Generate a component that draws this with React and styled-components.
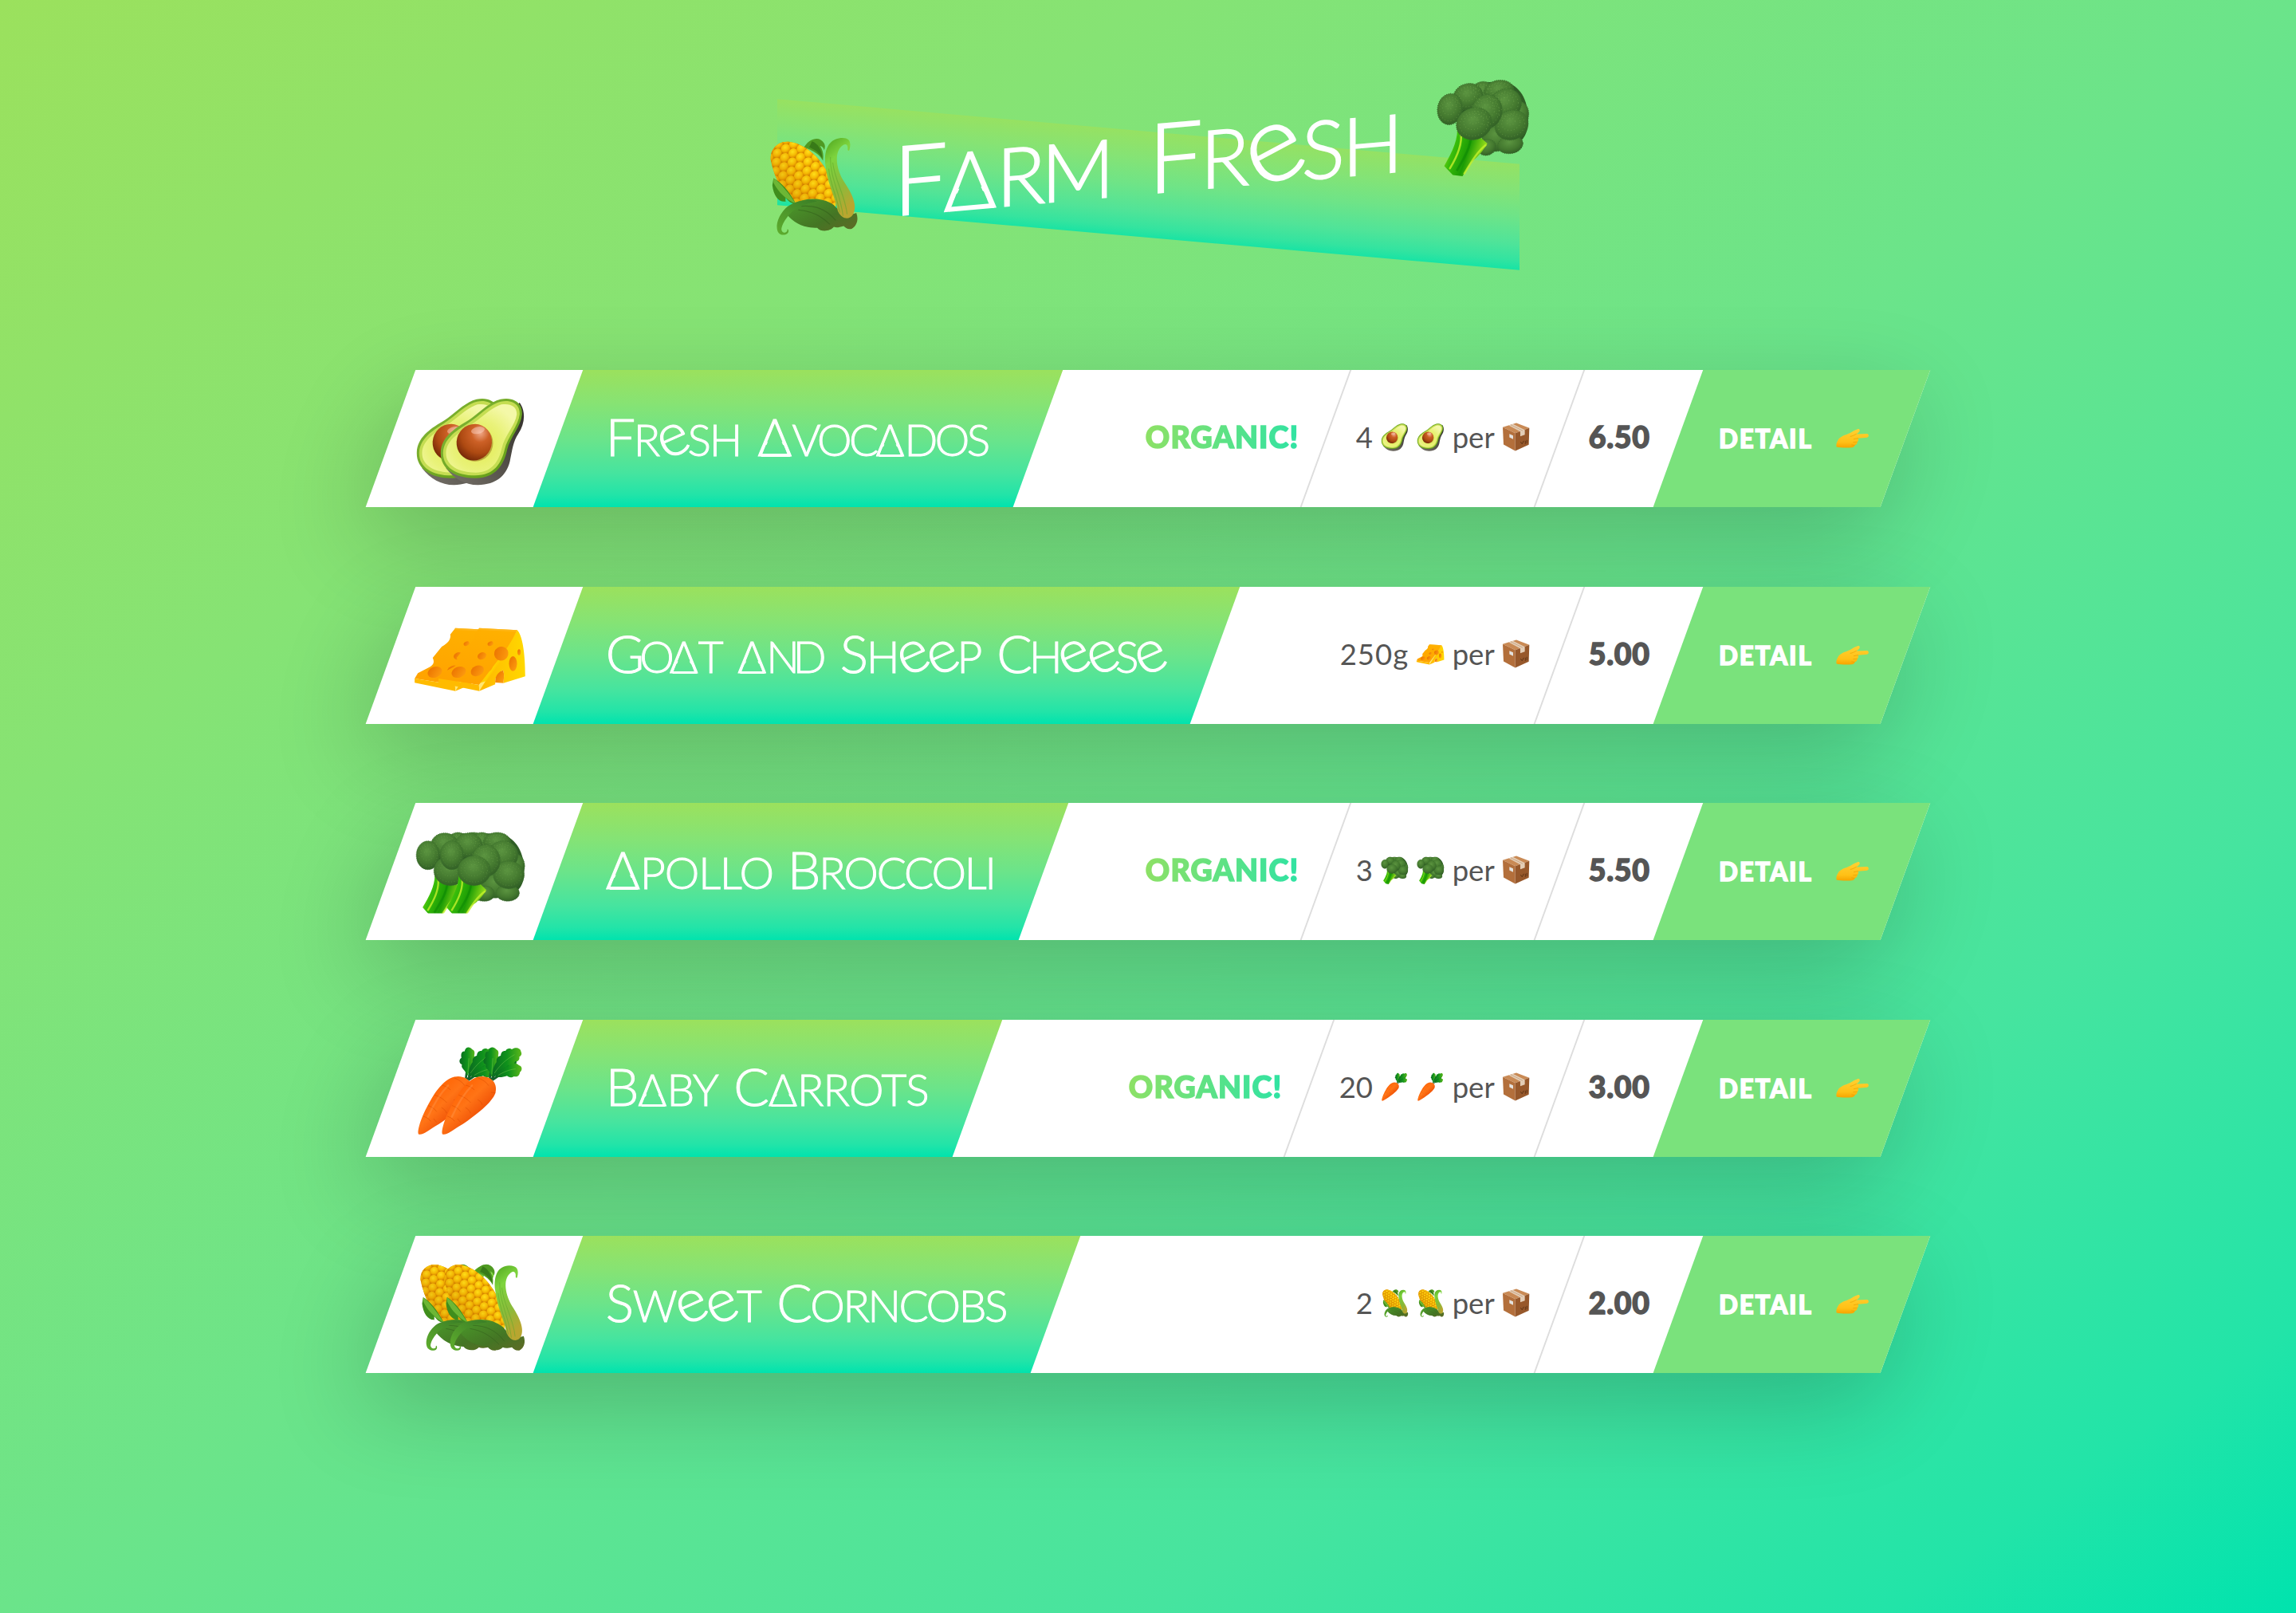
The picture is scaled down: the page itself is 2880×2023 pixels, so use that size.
import React, { useLayoutEffect, useRef, useState } from "react";
import styled, { createGlobalStyle, css } from "styled-components";

const GlobalStyle = createGlobalStyle`
  *, *::before, *::after { box-sizing: border-box; }
  body {
    margin: 0;
    font-family: Lato, "Open Sans", sans-serif;
    color: #555;
  }
`;

const FRESH_STOPS = "#9be15d, #86e374 25%, #6be48a 50%, #46e49f 75%, #22e4a8 91%, #00e3ae";

const Page = styled.main`
  min-height: 2023px;
  padding-top: 165px;
  background: linear-gradient(to bottom right, ${FRESH_STOPS});
  overflow: hidden;
`;

/* ---------- emoji style drawings ---------- */

const Svg = styled.svg`
  display: block;
  flex: none;
  width: ${(p) => p.$w}px;
  height: ${(p) => p.$h || p.$w}px;
  overflow: visible;
  ${(p) =>
    p.$cropped &&
    css`
      clip-path: inset(-2px -4px 6% -4px);
    `}
`;

function Avocado(props) {
  return (
    <Svg viewBox="0 0 330 330" {...props}>
      <defs>
        <radialGradient id="avoFlesh" cx=".45" cy=".6" r=".62">
          <stop offset="0" stopColor="#e2ea4c" />
          <stop offset=".6" stopColor="#e9f27a" />
          <stop offset="1" stopColor="#f4f8a8" />
        </radialGradient>
        <linearGradient id="avoSkin" x1="0" y1="0" x2="1" y2="1">
          <stop offset="0" stopColor="#86b83a" />
          <stop offset="1" stopColor="#5f9a12" />
        </linearGradient>
        <linearGradient id="avoBack" x1="1" y1="0" x2="0" y2="1">
          <stop offset="0" stopColor="#2f2c28" />
          <stop offset="1" stopColor="#77726a" />
        </linearGradient>
        <radialGradient id="avoPit" cx=".55" cy=".2" r=".85">
          <stop offset="0" stopColor="#f0a888" />
          <stop offset=".3" stopColor="#cc6026" />
          <stop offset=".65" stopColor="#ae4a12" />
          <stop offset="1" stopColor="#6a2206" />
        </radialGradient>
      </defs>
      <path fill="url(#avoBack)" d="M30 265C62 305 100 328 150 328c70-2 107-36 120-88 10-46 12-75 32-105 26-38 28-85 5-117z" />
      <path fill="url(#avoSkin)" d="M10 205C12 150 58 118 105 90 150 64 185 18 235 5c50-10 83 14 81 57-3 44-46 88-56 133-12 56-42 107-120 107C60 302 8 265 10 205z" />
      <path fill="#c5dd52" d="M19 205C22 155 65 125 109 98 155 70 190 26 236 14c43-8 73 11 71 48-4 42-46 86-56 131-12 53-40 99-111 99C66 292 17 260 19 205z" />
      <path fill="url(#avoFlesh)" d="M30 205C33 162 72 134 116 107 160 80 196 38 238 25c35-6 60 9 58 38-4 38-46 80-56 126-11 50-38 92-98 92C78 281 28 255 30 205z" />
      <ellipse cx="139" cy="170" rx="68" ry="69" fill="#8a5a10" opacity=".45" />
      <ellipse cx="136" cy="167" rx="66" ry="69" fill="url(#avoPit)" transform="rotate(25 136 167)" />
      <ellipse cx="150" cy="122" rx="26" ry="13" fill="#ffd9cc" opacity=".45" transform="rotate(-12 150 122)" />
    </Svg>
  );
}

function Cheese(props) {
  return (
    <Svg viewBox="0 0 330 330" {...props}>
      <defs>
        <linearGradient id="chTop" x1=".6" y1="0" x2=".3" y2="1">
          <stop offset="0" stopColor="#ffb000" />
          <stop offset="1" stopColor="#ffa200" />
        </linearGradient>
        <linearGradient id="chSide" x1="0" y1="0" x2="1" y2="0">
          <stop offset="0" stopColor="#ffb700" />
          <stop offset="1" stopColor="#ffd800" />
        </linearGradient>
        <linearGradient id="chHole" x1="0" y1="0" x2="1" y2="1">
          <stop offset="0" stopColor="#e96f00" />
          <stop offset="1" stopColor="#ffa010" />
        </linearGradient>
      </defs>
      <path fill="url(#chSide)" d="M298 58c20 20 30 90 30 174l-82 25c2-20 4-38-2-48-14 4-26 18-28 32l-1 21-60 25z" />
      <path fill="url(#chTop)" d="M155 50l143 8c-22 44-44 78-68 108l-76 98-152-24 12-20 42-22c16-8 22-18 14-36l34-42c22-12 36-28 32-46z" />
      <path fill="#ffb81c" d="M155 50l143 8-4 6-142-7z" opacity=".8" />
      <path fill="#ffbb00" d="M2 240l152 24 1 23L2 256z" />
      <path fill="#ffd200" d="M154 264l76-98 6 6-81 115z" opacity=".55" />
      <g fill="url(#chHole)">
        <ellipse cx="197" cy="109" rx="11" ry="8" transform="rotate(-25 197 109)" />
        <ellipse cx="165" cy="155" rx="17" ry="13" transform="rotate(-25 165 155)" />
        <ellipse cx="78" cy="216" rx="28" ry="20" transform="rotate(-22 78 216)" />
        <ellipse cx="148" cy="211" rx="26" ry="19" transform="rotate(-25 148 211)" />
        <ellipse cx="238" cy="146" rx="27" ry="26" transform="rotate(-30 238 146)" />
        <ellipse cx="282" cy="184" rx="15" ry="28" />
        <ellipse cx="305" cy="141" rx="6" ry="11" />
        <path d="M246 257c2-20 4-38-2-48-14 4-26 18-28 32l-1 14z" />
      </g>
    </Svg>
  );
}

const FLORETS = [
  [215, 205, 52, 48],
  [180, 236, 32, 28],
  [262, 234, 44, 31],
  [290, 132, 36, 46],
  [165, 42, 40, 36],
  [222, 44, 52, 38],
  [245, 92, 56, 54],
  [266, 166, 58, 52],
  [115, 54, 52, 46],
  [52, 92, 44, 54],
  [180, 112, 54, 60],
  [136, 150, 62, 56],
];

function Broccoli(props) {
  return (
    <Svg viewBox="0 0 330 330" {...props}>
      <defs>
        <radialGradient id="brFloret" cx=".45" cy=".35" r=".68">
          <stop offset="0" stopColor="#5b9440" />
          <stop offset=".6" stopColor="#44792f" />
          <stop offset="1" stopColor="#305e25" />
        </radialGradient>
        <linearGradient id="brStem" x1="0" y1="0" x2="1" y2=".4">
          <stop offset="0" stopColor="#b8ec20" />
          <stop offset=".35" stopColor="#38bd0a" />
          <stop offset=".65" stopColor="#1c9c05" />
          <stop offset="1" stopColor="#9be01c" />
        </linearGradient>
      </defs>
      <path fill="#2f5d25" d="M60 50c40-40 130-50 200-30 50 30 66 80 64 150-6 50-40 80-90 70L80 150z" />
      {FLORETS.slice(0, 4).map(([x, y, rx, ry]) => (
        <ellipse key={`${x}-${y}`} cx={x} cy={y} rx={rx} ry={ry} fill="url(#brFloret)" stroke="#396a2b" strokeWidth="3" strokeDasharray="3 4" />
      ))}
      <path fill="url(#brStem)" d="M76 150c8 44-16 92-44 138l30 34 34 7 28-46c26-14 44-38 58-60l-30-30z" />
      <path fill="none" stroke="#c4f02c" strokeWidth="7" strokeLinecap="round" d="M90 180c6 40-14 80-38 118M176 228c-26 18-46 48-74 92" opacity=".8" />
      <path fill="none" stroke="#0f8a04" strokeWidth="8" d="M124 196c0 30-18 64-48 112" opacity=".65" />
      {FLORETS.slice(4).map(([x, y, rx, ry]) => (
        <ellipse key={`${x}-${y}`} cx={x} cy={y} rx={rx} ry={ry} fill="url(#brFloret)" stroke="#3b6f2d" strokeWidth="3" strokeDasharray="3 4" />
      ))}
      {FLORETS.slice(4).map(([x, y, rx, ry]) => (
        <g key={`${x}-${y}`} fill="none" stroke="#7fb257" strokeWidth="3" strokeDasharray="2 9" opacity=".5">
          <ellipse cx={x - 2} cy={y - 8} rx={rx * 0.55} ry={ry * 0.5} />
          <ellipse cx={x - 2} cy={y - 12} rx={rx * 0.25} ry={ry * 0.22} />
          <ellipse cx={x} cy={y} rx={rx * 0.8} ry={ry * 0.76} />
        </g>
      ))}
    </Svg>
  );
}

function Carrot(props) {
  return (
    <Svg viewBox="0 0 330 330" {...props}>
      <defs>
        <linearGradient id="caBody" x1=".25" y1=".25" x2=".75" y2=".8">
          <stop offset="0" stopColor="#ff6405" />
          <stop offset=".4" stopColor="#ff7416" />
          <stop offset="1" stopColor="#ea4300" />
        </linearGradient>
        <linearGradient id="caLeaf" x1="0" y1="0" x2="1" y2="0">
          <stop offset="0" stopColor="#0a6a20" />
          <stop offset=".5" stopColor="#0f921c" />
          <stop offset="1" stopColor="#5cb81c" />
        </linearGradient>
      </defs>
      <path fill="none" stroke="#14602c" strokeWidth="8" d="M194 122l6-50M198 122l50-62M204 122l50-34" />
      <path fill="#0b7420" d="M202 110c10-44 30-70 62-84l34 16-10 48c-24 14-60 10-86 20z" />
      <path fill="url(#caLeaf)" d="M200 106c-6-22-26-28-20-42-14-8-10-22-2-26-4-18 4-26 12-24 2-18 20-20 28-8 12 4 10 18 8 24 6 14 0 20-4 26 2 18-13 30-22 50z" />
      <path fill="url(#caLeaf)" d="M204 110c0-28 8-46 16-56-2-16 8-22 16-24 0-14 10-20 18-18 6-12 18-10 24-6 12-10 32-6 34 8 6 12-2 18-6 20 2 14-8 20-16 18-6 16-18 18-26 14-14 12-44 20-60 44z" />
      <path fill="url(#caLeaf)" d="M214 110c12-24 30-38 48-40 14-16 34-14 42-4 16 4 12 22 4 26-2 18-16 18-22 16-12 8-22 2-26-2-16 6-28 6-46 4z" />
      <path fill="none" stroke="#9be060" strokeWidth="2" opacity=".5" d="M202 100l4-60M212 96c20-30 44-52 76-70M226 104c20-12 42-22 66-24" />
      <path fill="url(#caBody)" d="M18 326C8 322 24 262 62 198c28-50 64-90 104-90 42 2 58 32 50 62-12 36-74 84-124 118-34 20-60 42-74 38z" />
      <g fill="none" stroke="#d94a00" strokeWidth="3" opacity=".5" strokeLinecap="round">
        <path d="M106 142c12 2 22 8 30 16M152 114c16 6 30 16 38 28M78 178c18 6 34 16 44 28M200 168l14 2M150 196c10 6 14 10 16 18M54 218c14 6 24 12 30 22M104 226c10 6 16 12 18 20M36 258c10 4 20 10 26 18M74 268l10 12" />
      </g>
      <path fill="none" stroke="#ffb070" strokeWidth="7" strokeLinecap="round" opacity=".25" d="M128 142c-34 34-58 78-76 118" />
    </Svg>
  );
}

const KERNELS = [];
for (let row = -1; row < 13; row += 1) {
  for (let col = -1; col < 7; col += 1) {
    KERNELS.push([col * 32 + (row % 2 ? 16 : 0), row * 27 + 8]);
  }
}

function Corn(props) {
  return (
    <Svg viewBox="0 0 330 330" {...props}>
      <defs>
        <clipPath id="coCob">
          <path d="M24 60C22 20 55-2 88 4c56 12 112 66 142 136 20 50 25 90 18 110L110 225C70 190 38 130 24 60z" />
        </clipPath>
        <radialGradient id="coKernel" cx=".5" cy=".35" r=".65">
          <stop offset="0" stopColor="#ffe21a" />
          <stop offset=".6" stopColor="#f8bd04" />
          <stop offset="1" stopColor="#e08e00" />
        </radialGradient>
        <linearGradient id="coShade" x1=".8" y1=".1" x2=".1" y2=".7">
          <stop offset=".4" stopColor="#c87800" stopOpacity="0" />
          <stop offset="1" stopColor="#b86400" stopOpacity=".5" />
        </linearGradient>
        <linearGradient id="coHusk" x1="0" y1="0" x2=".3" y2="1">
          <stop offset="0" stopColor="#4fa51e" />
          <stop offset=".3" stopColor="#7ed43e" />
          <stop offset=".7" stopColor="#8cba3a" />
          <stop offset="1" stopColor="#b8a630" />
        </linearGradient>
        <linearGradient id="coBase" x1="0" y1="0" x2="1" y2="1">
          <stop offset="0" stopColor="#4a9a2a" />
          <stop offset=".6" stopColor="#447524" />
          <stop offset="1" stopColor="#5f6a26" />
        </linearGradient>
        <linearGradient id="coCurl" x1="1" y1="0" x2="0" y2="1">
          <stop offset="0" stopColor="#3a7d26" />
          <stop offset="1" stopColor="#5fae2e" />
        </linearGradient>
      </defs>
      <path fill="#4f9a22" d="M140 28c20-30 54-36 70-8 4 8 4 16 0 24-2-10-8-14-14-16 12 20 12 34 10 52-14-26-38-40-66-52z" />
      <path fill="#2f6c14" d="M168 10c22 10 34 34 36 62-12-20-26-34-46-42z" opacity=".7" />
      <g clipPath="url(#coCob)">
        <rect width="330" height="330" fill="#d28200" />
        <g transform="rotate(-25 60 40)">
          {KERNELS.map(([x, y]) => (
            <ellipse key={`${x}-${y}`} cx={x} cy={y} rx="16.5" ry="16" fill="url(#coKernel)" />
          ))}
        </g>
        <rect width="330" height="330" fill="url(#coShade)" />
      </g>
      <path fill="#3f8e1c" d="M34 126c24 14 54 48 78 96-20-2-28-14-36-24 0 10-2 14 4 12-24 6-46-20-50-60z" />
      <path fill="#78c23c" d="M34 126c28 22 50 54 78 96-34-18-60-44-78-80z" opacity=".8" />
      <path fill="url(#coBase)" d="M104 220c50-18 104-12 140 18 26 32 54 42 78 34 8 20 4 44-16 54-14 2-22-6-28-12-18 4-26 4-34 0-12 14-44 16-58-2-46-2-80-22-106-56z" />
      <path fill="none" stroke="#2f5c1a" strokeWidth="3" opacity=".5" d="M130 232c50 0 90 20 120 60M120 244c50 8 80 30 110 60" />
      <path fill="url(#coCurl)" d="M108 218c30-8 62-8 78 2-38 4-82 16-104 46-14 16-22 36-20 44 4 12 14 10 20 4-2-6 2-8 4-2 2 16-18 18-30 10C30 302 56 230 108 218z" />
      <path fill="url(#coHusk)" d="M215 100C208 45 225 8 268 7c28 0 38 14 30 44-2 4-6 2-6-2 2-18-8-24-20-14-30 24-18 84 8 126 32 50 46 90 30 116-12 18-38 14-52-16-10-50-36-100-43-161z" />
      <path fill="none" stroke="#5ea62c" strokeWidth="3" opacity=".55" d="M232 70c-2 70 34 130 44 208M240 90c6 60 44 120 50 184M226 110c6 60 30 100 38 156" />
    </Svg>
  );
}

function Parcel(props) {
  return (
    <Svg viewBox="0 0 102 107" {...props}>
      <path fill="#c98a55" d="M1 17L52 1l49 19-53 19z" />
      <path fill="#b36f3b" d="M1 17l47 22v67L4 82z" />
      <path fill="#97582b" d="M48 39l53-19-2 63-51 23z" />
      <path fill="#e3cdb6" d="M23 10l16-5 45 22v18l-17 6V33z" />
      <path fill="none" stroke="#c0966e" strokeWidth="2" d="M31 8l45 22" />
      <path fill="#e4e2df" d="M26 42l14 6v14l-14-7z" />
      <path fill="none" stroke="#5f3415" strokeWidth="3" d="M68 72l6 8 6-12M86 68v12M92 65v12" />
    </Svg>
  );
}

function PointingHand(props) {
  return (
    <Svg viewBox="0 0 124 72" {...props}>
      <defs>
        <linearGradient id="hand" x1="0" y1="0" x2="0" y2="1">
          <stop offset="0" stopColor="#ffd234" />
          <stop offset=".7" stopColor="#ffc016" />
          <stop offset="1" stopColor="#f5a400" />
        </linearGradient>
      </defs>
      <path fill="url(#hand)" d="M8 42C16 26 40 22 54 15 64 9 74 3 84 0c7 0 8 6 4 11l-10 8 40-1c8 2 8 12 0 14l-34 3c3 6 1 11-3 13 1 8-4 12-9 13-2 6-6 9-12 9-18 2-42 1-58-2C0 58 3 50 8 42z" />
      <path fill="none" stroke="#e89c00" strokeWidth="2" strokeLinecap="round" d="M77 19c-8 4-14 8-22 9M84 35l-16 3M80 49l-14 1M70 62l-10-2" />
    </Svg>
  );
}

/* ---------- text fitted to its measure ---------- */

const Measure = styled.span`
  display: inline-block;
  flex: none;
  width: ${(p) => p.$width}px;
  white-space: nowrap;
`;
const Natural = styled.span`
  display: inline-block;
`;

function Tracked({ width, slack = 0, gaps, children }) {
  const ref = useRef(null);
  const [tracking, setTracking] = useState(0);
  useLayoutEffect(() => {
    setTracking((width + slack - ref.current.offsetWidth) / Math.max(gaps, 1));
  }, [width, slack, gaps]);
  return (
    <Measure $width={width}>
      <Natural ref={ref} style={{ letterSpacing: tracking, marginLeft: -slack * 0.35 }}>
        {children}
      </Natural>
    </Measure>
  );
}

const Display = styled.span`
  display: flex;
  gap: ${(p) => p.$gap}px;
  font-size: ${(p) => p.$size}px;
  font-weight: 300;
  line-height: 1;
  color: #fff;
  text-transform: uppercase;
  -webkit-text-stroke: 0.018em #fff;
`;
const Capital = styled.span`
  font-size: 1.2em;
  line-height: 0;
`;
const RoundE = styled.span`
  display: inline-block;
  font-size: 1.36em;
  line-height: 0;
  text-transform: none;
  transform: rotate(-24deg);
  transform-origin: 46% 0.13em;
`;
/* The crossbar is cut out of the letter and laid along its baseline. */
const DeltaA = styled.span`
  position: relative;
  display: inline-block;
  margin: -0.2em 0;
  font-size: ${(p) => (p.$capital ? 1.2 : 1)}em;
  line-height: 1;
  letter-spacing: 0;
  clip-path: polygon(
    evenodd,
    0 0, 100% 0, 100% 100%, 0 100%, 0 0,
    calc(50% - 0.09em) 0.52em,
    calc(50% + 0.09em) 0.52em,
    calc(50% + 0.21em) 0.78em,
    calc(50% - 0.21em) 0.78em,
    calc(50% - 0.09em) 0.52em,
    0 0
  );
  &::after {
    content: "";
    position: absolute;
    left: 10%;
    right: 5%;
    top: 0.835em;
    height: 0.06em;
    background: #fff;
  }
`;

function DisplayWord({ text, width, size, slack = 0.09 }) {
  const fixed = (text.match(/a/gi) || []).length;
  return (
    <Tracked width={width} slack={size * slack} gaps={text.length - 1 - fixed}>
      {text.split(/([aeA]|^[A-Z])/).filter(Boolean).map((part, i) => {
        if (part === "e") return <RoundE key={i}>e</RoundE>;
        if (part === "a" || part === "A") return <DeltaA key={i} $capital={part === "A"}>{part}</DeltaA>;
        if (i === 0 && part.length === 1 && part !== part.toLowerCase()) return <Capital key={i}>{part}</Capital>;
        return part;
      })}
    </Tracked>
  );
}

/* ---------- header ---------- */

const Header = styled.header`
  position: relative;
  display: flex;
  justify-content: center;
  width: 931px;
  height: 133px;
  margin: 0 auto 166px;
  &::before {
    content: "";
    position: absolute;
    inset: 0;
    background: linear-gradient(${FRESH_STOPS});
    opacity: 0.8;
    transform: skewY(5deg);
  }
`;
const Heading = styled.h1`
  position: relative;
  display: flex;
  flex: none;
  align-items: flex-start;
  justify-content: space-between;
  width: 961px;
  margin: -28px 0 0 -3px;
  transform: skewY(-5deg);
`;
const HeadingText = styled.span`
  padding-top: 17px;
`;

/* ---------- product rows ---------- */

const List = styled.ul`
  display: flex;
  flex-direction: column;
  gap: 100px;
  width: 1900px;
  margin: 0 auto;
  padding: 0;
  list-style: none;
`;
const Row = styled.li`
  display: flex;
  height: 171.6px;
  background: #fff;
  box-shadow: 0 40px 120px rgba(0, 0, 0, 0.2);
  transform: skewX(-20deg);
`;
const Upright = styled.span`
  display: flex;
  align-items: center;
  gap: ${(p) => p.$gap || 0}px;
  transform: skewX(20deg);
`;
const Cell = styled.div`
  display: flex;
  align-items: center;
  justify-content: center;
  padding: 0 36px 4px;
  font-size: 36.5px;
`;
const PictureCell = styled(Cell)`
  width: 210px;
  padding: 9px 8px 0 0;
`;
const Pair = styled(Upright)`
  & > svg + svg {
    margin-left: -80px;
  }
`;
const TitleCell = styled(Cell)`
  padding: 3px 62px 0;
  background: linear-gradient(${FRESH_STOPS});
`;
const Title = styled.h2`
  margin: 0;
  transform: skewX(20deg);
`;
const Side = styled.div`
  display: flex;
  margin-left: auto;
`;
const OrganicCell = styled(Cell)`
  padding-right: 35px;
`;
const Amount = styled(Cell)`
  padding: 0 37px 4px 36px;
  border-left: ${(p) => (p.$divided ? "2px solid #ddd" : "0")};
`;
const PriceCell = styled(Cell)`
  padding: 0 37px 4px 35px;
  border-left: 2px solid #ddd;
`;
const Organic = styled.strong`
  font-weight: 900;
  font-size: 37.5px;
  color: transparent;
  background: linear-gradient(100deg, #8fe164, #2ee3a4);
  background-clip: text;
  -webkit-background-clip: text;
  -webkit-text-stroke: 1.6px transparent;
`;
const Price = styled.strong`
  font-weight: 900;
  font-size: 37.5px;
  -webkit-text-stroke: 1.4px #555;
`;
const Detail = styled.a`
  display: flex;
  align-items: center;
  justify-content: center;
  width: 285px;
  padding: 0 0 0 4px;
  background: #7ae27c;
  color: #fff;
  font-size: 31.5px;
  font-weight: 900;
  -webkit-text-stroke: 1.3px #fff;
`;

const PRODUCTS = [
  { words: [["Fresh", 167], ["Avocados", 287]], Icon: Avocado, organic: true, amount: "4", amountWidth: 21, price: "6.50" },
  { words: [["Goat", 143], ["and", 106], ["Sheep", 174], ["Cheese", 209]], gap: 22.5, Icon: Cheese, single: true, amount: "250g", amountWidth: 86, price: "5.00" },
  { words: [["Apollo", 206], ["Broccoli", 257]], gap: 22, Icon: Broccoli, cropped: true, organic: true, amount: "3", amountWidth: 21, price: "5.50" },
  { words: [["Baby", 137], ["Carrots", 241]], Icon: Carrot, organic: true, amount: "20", amountWidth: 42, price: "3.00" },
  { words: [["Sweet", 191], ["Corncobs", 285]], Icon: Corn, amount: "2", amountWidth: 21, price: "2.00" },
];

function Product({ words, gap = 23.5, Icon, cropped, organic, single, amount, amountWidth, price }) {
  return (
    <Row>
      <PictureCell>
        <Pair>
          <Icon $w={110} $cropped={cropped} />
          <Icon $w={110} $cropped={cropped} />
        </Pair>
      </PictureCell>
      <TitleCell>
        <Title>
          <Display $size={55} $gap={gap}>
            {words.map(([text, width]) => (
              <DisplayWord key={text} text={text} width={width} size={55} />
            ))}
          </Display>
        </Title>
      </TitleCell>
      <Side>
        {organic && (
          <OrganicCell>
            <Upright>
              <Organic>
                <Tracked width={191} gaps={7}>ORGANIC!</Tracked>
              </Organic>
            </Upright>
          </OrganicCell>
        )}
        <Amount $divided={organic}>
          <Upright $gap={10}>
            <Tracked width={amountWidth} gaps={amount.length - 1}>{amount}</Tracked>
            <Icon $w={35} />
            {!single && <Icon $w={35} />}
            <Tracked width={53} gaps={3}>per</Tracked>
            <Parcel $w={34} $h={36} />
          </Upright>
        </Amount>
        <PriceCell>
          <Upright>
            <Price>
              <Tracked width={76} gaps={3}>{price}</Tracked>
            </Price>
          </Upright>
        </PriceCell>
      </Side>
      <Detail>
        <Upright $gap={31}>
          <Tracked width={116} gaps={5}>DETAIL</Tracked>
          <PointingHand $w={41} $h={24} />
        </Upright>
      </Detail>
    </Row>
  );
}

export default function App() {
  return (
    <>
      <GlobalStyle />
      <Page>
        <Header>
          <Heading>
            <Corn $w={119} />
            <HeadingText>
              <Display $size={101} $gap={54}>
                <DisplayWord text="Farm" width={266} size={101} slack={0.12} />
                <DisplayWord text="Fresh" width={308} size={101} slack={0.12} />
              </Display>
            </HeadingText>
            <Broccoli $w={119} />
          </Heading>
        </Header>
        <List>
          {PRODUCTS.map((product) => (
            <Product key={product.price} {...product} />
          ))}
        </List>
      </Page>
    </>
  );
}
